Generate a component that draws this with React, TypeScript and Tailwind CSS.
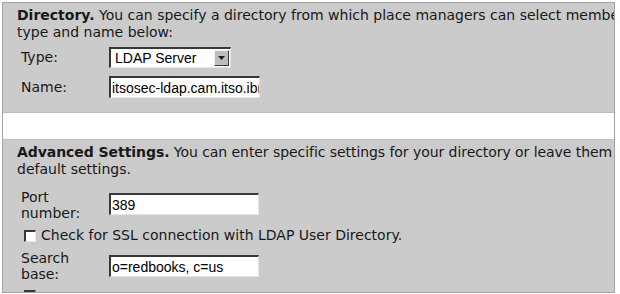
import React from "react";

const txt = "font-['DejaVu_Sans',Verdana,sans-serif] text-[14px] leading-[17px] text-[#181818]";

function TextInput({ value, w }: { value: string; w: string }) {
  return (
    <input
      readOnly
      value={value}
      className={`${w} h-[22px] block bg-white border-t-2 border-l-2 border-t-[#383838] border-l-[#383838] border-r border-b border-r-[#e4e4e4] border-b-[#e4e4e4] pl-[1px] pr-0 py-0 outline-none font-['Liberation_Sans',Arial,sans-serif] text-[14px] text-black`}
    />
  );
}

function Checkbox() {
  return (
    <div className="w-[12px] h-[12px] shrink-0 bg-white border-t-2 border-l-2 border-t-[#383838] border-l-[#383838] border-r border-b border-r-[#e8e8e8] border-b-[#e8e8e8]" />
  );
}

export default function App() {
  return (
    <div className="w-[620px] h-[294px] bg-white overflow-hidden pl-[2px] pt-[2px]">
      <div className="w-[613px] h-[291px] border border-[#a4a4a4] overflow-hidden flex flex-col">
        <div className={`bg-[#cbcbcb] h-[109px] shrink-0 pl-[14px] pt-[4px] ${txt} whitespace-nowrap overflow-hidden`}>
          <div>
            <b>Directory.</b> You can specify a directory from which place managers can select members
          </div>
          <div>type and name below:</div>
          <div className="grid grid-cols-[88px_1fr] items-center gap-y-[8px] pl-[4px] mt-[6px]">
            <div>Type:</div>
            <div className="w-[122px] h-[21px] bg-white border-t-2 border-l-2 border-t-[#383838] border-l-[#383838] border-r border-b border-r-[#e4e4e4] border-b-[#e4e4e4] flex items-center">
              <span className="flex-1 pl-[4px] font-['Liberation_Sans',Arial,sans-serif] text-[14px] text-black">LDAP Server</span>
              <div className="w-[15px] h-[16px] mr-[1px] bg-[#bdbdbd] border-t border-l border-t-[#f2f2f2] border-l-[#f2f2f2] border-r border-b border-r-[#3a3a3a] border-b-[#3a3a3a] flex items-center justify-center">
                <svg width="7" height="4" viewBox="0 0 7 4">
                  <path d="M0 0 H7 L3.5 4 Z" fill="#1e1e1e" />
                </svg>
              </div>
            </div>
            <div>Name:</div>
            <TextInput value="itsosec-ldap.cam.itso.ibm.com" w="w-[151px]" />
          </div>
        </div>
        <div className="h-[28px] shrink-0 bg-white border-t border-b border-[#bdbdbd]" />
        <div className={`bg-[#cbcbcb] flex-1 pl-[14px] pt-[4px] ${txt} whitespace-nowrap overflow-hidden`}>
          <div className="tracking-[-0.06px]">
            <b>Advanced Settings.</b> You can enter specific settings for your directory or leave them
          </div>
          <div>default settings.</div>
          <div className="grid grid-cols-[88px_1fr] items-start pl-[4px] mt-[11px]">
            <div className="leading-[16px]">
              Port
              <br />
              number:
            </div>
            <div className="pt-[4px]">
              <TextInput value="389" w="w-[150px]" />
            </div>
          </div>
          <div className="flex items-center gap-[5px] pl-[7px] mt-[6px]">
            <Checkbox />
            <span>Check for SSL connection with LDAP User Directory.</span>
          </div>
          <div className="grid grid-cols-[88px_1fr] items-start pl-[4px] mt-[6px]">
            <div className="leading-[16px]">
              Search
              <br />
              base:
            </div>
            <div className="pt-[5px]">
              <TextInput value="o=redbooks, c=us" w="w-[150px]" />
            </div>
          </div>
          <div className="pl-[7px] mt-[8px]">
            <Checkbox />
          </div>
        </div>
      </div>
    </div>
  );
}
